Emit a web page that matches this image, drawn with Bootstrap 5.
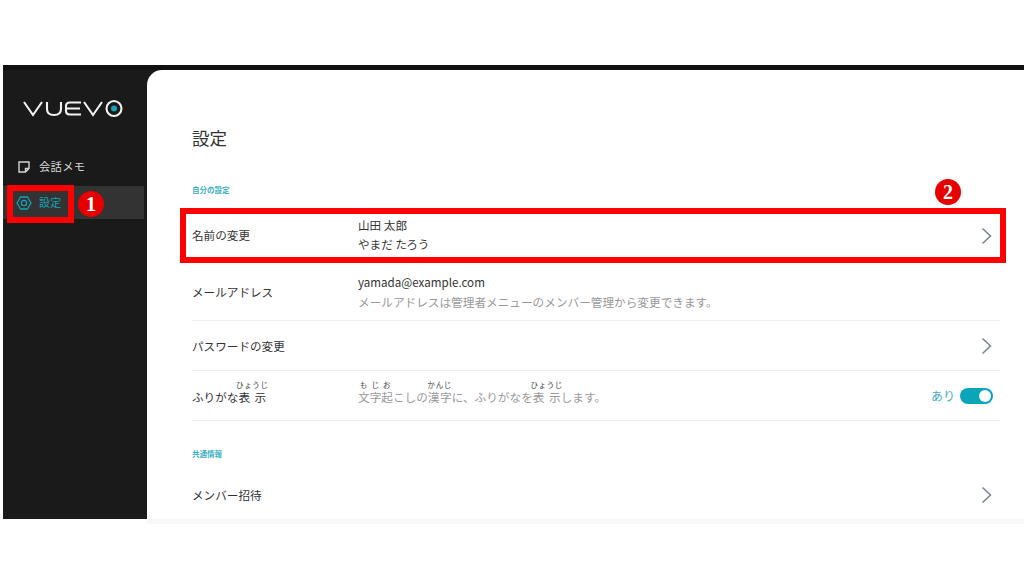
<!DOCTYPE html>
<html lang="ja">
<head>
<meta charset="utf-8">
<title>設定</title>
<link href="https://cdn.jsdelivr.net/npm/bootstrap@5.3.0/dist/css/bootstrap.min.css" rel="stylesheet">
<style>
html,body{height:576px;overflow:hidden;background:#fff;}
body{font-family:"Noto Sans CJK JP","Noto Sans",sans-serif;color:#333;position:relative;}
.frame{margin:65px 0 0 3px;height:454px;background:#1a1a1a;border-top:5px solid #111;}
.side{width:144px;flex:none;color:#d4d4d4;}
.brand{padding:24px 0 0 20px;height:80px;}
.side-item{height:33px;margin-right:3px;padding-left:14px;font-size:11.3px;letter-spacing:.3px;}
.side-item.on{background:#333;color:#12a3b8;margin-top:3px;padding-left:13px;}
.side-item.on svg{margin-right:-1px;}
.side-item.on span{font-size:11px;}
.main{background:#fff;border-top-left-radius:15px;padding:55px 24px 0 45px;height:449px;overflow:hidden;}
.page-title{font-size:17.5px;font-weight:400;line-height:26px;margin:0 0 33px;color:#333;}
.sec-label{font-size:7.5px;line-height:12px;font-weight:700;color:#3cb0c2;}
.srow{display:flex;align-items:center;font-size:11.6px;border-bottom:1px solid #eee;color:#333;}
.srow.r1{height:49px;margin-top:14px;border:0;padding-top:3px;margin-bottom:5px;}
.r1 .sval{padding-bottom:2px;}
.r2{height:57px;}.r3{height:50px;}.r4{height:50px;}
.r2 .sname,.r3 .sname,.r5 .sname{padding-top:2px;}
.r4 .sname,.r4 .sval{padding-bottom:6px;}
.srow.r5{height:50px;border:0;margin-top:10px;}
.sname{width:166px;flex:none;}
.sval{flex:1;line-height:19px;}
.hint{color:#999;font-size:11.65px;}
.chev{flex:none;margin-right:8px;}
ruby{ruby-position:over;}
rt{font-size:7.5px;color:#444;letter-spacing:.6px;padding-bottom:1px;}
.sec2{margin-top:27px;}
.toggle-label{font-size:12px;color:#45aec0;margin-right:5px;}
.tog{width:33px;height:16px;border-radius:8px;background:#0ba5ba;position:relative;margin-right:7px;flex:none;}
.tog::after{content:"";position:absolute;right:2px;top:2px;width:12px;height:12px;border-radius:50%;background:#fff;}
.redbox{position:absolute;border:4px solid #f00;}
.box-a{left:7px;top:185px;width:67px;height:38px;border-width:6px;}
.box-b{left:180px;top:208px;width:826px;height:55px;border-width:6px;}
.num{position:absolute;width:26px;height:26px;border-radius:50%;background:#e60000;color:#fff;font-family:"Liberation Serif",serif;font-weight:700;font-size:20px;line-height:26px;text-align:center;}
.num-a{left:78px;top:191px;}
.num-b{left:935px;top:179px;}
.foot{height:5px;background:#f8f8f8;margin-left:147px;}
</style>
</head>
<body>
<div class="frame d-flex">
  <div class="side">
    <div class="brand">
      <svg width="102" height="20" viewBox="0 0 102 20" fill="none" stroke="#f2f2f2" stroke-width="2.1">
        <path d="M1 3 L10 16 L19 3"/>
        <path d="M24 3 V10 Q24 16 31 16 Q38 16 38 10 V3"/>
        <path d="M58 3.5 H47 Q43 3.5 43 7 V12 Q43 15.5 47 15.5 H58 M44 9.5 H57"/>
        <path d="M61 3 L70 16 L79 3"/>
        <circle cx="91" cy="9.5" r="7.5"/>
        <circle cx="91" cy="9.5" r="3" fill="#12a3b8" stroke="none"/>
      </svg>
    </div>
    <div class="side-item d-flex align-items-center gap-2">
      <svg width="14" height="14" viewBox="0 0 14 14" fill="none" stroke="#d4d4d4" stroke-width="1.4"><path d="M2 2 H12 V8.5 L8.5 12 H2 Z M12 8.5 H8.5 V12"/></svg>
      <span>会話メモ</span>
    </div>
    <div class="side-item on d-flex align-items-center gap-2">
      <svg width="16" height="16" viewBox="0 0 16 16" fill="none" stroke="#12a3b8" stroke-width="1.3" stroke-linejoin="round"><path d="M1 8 L4.5 2 H11.5 L15 8 L11.5 14 H4.5 Z"/><circle cx="8" cy="8" r="2.6"/></svg>
      <span>設定</span>
    </div>
  </div>
  <div class="main flex-grow-1">
    <h1 class="page-title">設定</h1>
    <div class="sec-label">自分の設定</div>
    <div class="srow r1">
      <div class="sname">名前の変更</div>
      <div class="sval">山田 太郎<br>やまだ たろう</div>
      <svg class="chev" width="11" height="18" viewBox="0 0 11 18" fill="none" stroke="#7d8690" stroke-width="1.6"><path d="M1.5 1.5 L9.5 9 L1.5 16.5"/></svg>
    </div>
    <div class="srow r2">
      <div class="sname">メールアドレス</div>
      <div class="sval">yamada@example.com<br><span class="hint">メールアドレスは管理者メニューのメンバー管理から変更できます。</span></div>
    </div>
    <div class="srow r3">
      <div class="sname">パスワードの変更</div>
      <div class="sval"></div>
      <svg class="chev" width="11" height="18" viewBox="0 0 11 18" fill="none" stroke="#7d8690" stroke-width="1.6"><path d="M1.5 1.5 L9.5 9 L1.5 16.5"/></svg>
    </div>
    <div class="srow r4">
      <div class="sname">ふりがな<ruby>表示<rt>ひょうじ</rt></ruby></div>
      <div class="sval hint"><ruby>文字起<rt>もじお</rt></ruby>こしの<ruby>漢字<rt>かんじ</rt></ruby>に、ふりがなを<ruby>表示<rt>ひょうじ</rt></ruby>します。</div>
      <span class="toggle-label">あり</span>
      <span class="tog"></span>
    </div>
    <div class="sec-label sec2">共通情報</div>
    <div class="srow r5">
      <div class="sname">メンバー招待</div>
      <div class="sval"></div>
      <svg class="chev" width="11" height="18" viewBox="0 0 11 18" fill="none" stroke="#7d8690" stroke-width="1.6"><path d="M1.5 1.5 L9.5 9 L1.5 16.5"/></svg>
    </div>
  </div>
</div>
<div class="foot"></div>
<div class="redbox box-a"></div>
<div class="redbox box-b"></div>
<div class="num num-a">1</div>
<div class="num num-b">2</div>
</body>
</html>
